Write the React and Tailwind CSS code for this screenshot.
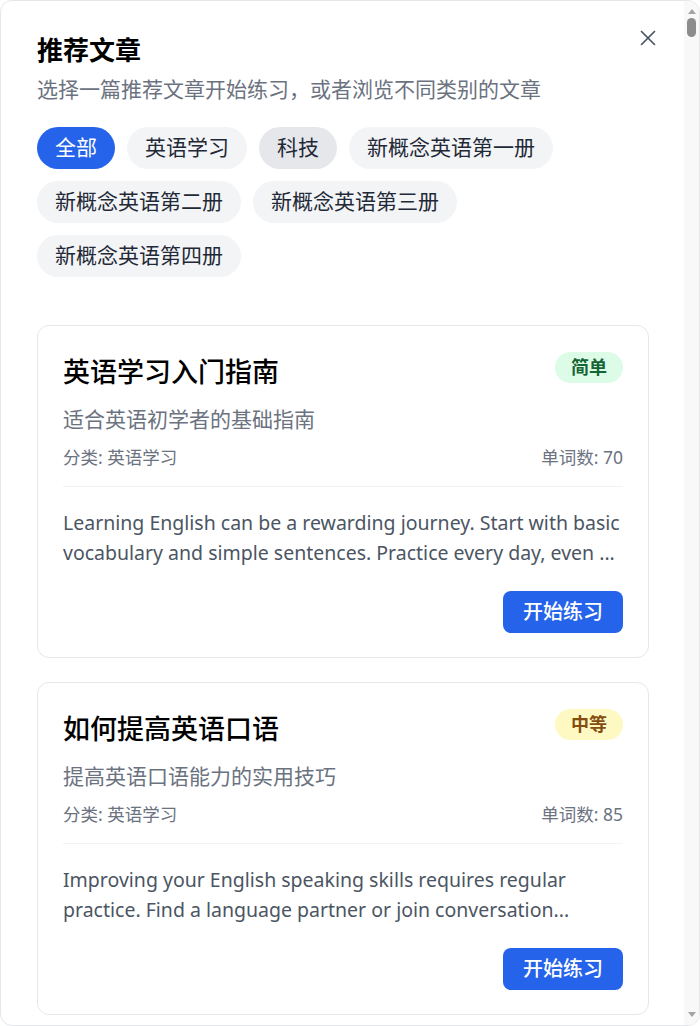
import React from "react";

const baseArticles = [
  {
    title: "英语学习入门指南",
    desc: "适合英语初学者的基础指南",
    category: "英语学习",
    words: 70,
    level: "简单",
    body: "Learning English can be a rewarding journey. Start with basic vocabulary and simple sentences. Practice every day, even ...",
  },
  {
    title: "如何提高英语口语",
    desc: "提高英语口语能力的实用技巧",
    category: "英语学习",
    words: 85,
    level: "中等",
    body: "Improving your English speaking skills requires regular practice. Find a language partner or join conversation...",
  },
  {
    title: "人工智能的未来",
    desc: "探讨人工智能技术的发展趋势",
    category: "科技",
    words: 120,
    level: "困难",
    body: "Artificial intelligence is changing the way we live and work. From smart assistants to self-driving cars, AI is everywh...",
  },
];

const books = [
  { name: "新概念英语第一册", count: 3, level: "简单" },
  { name: "新概念英语第二册", count: 2, level: "中等" },
  { name: "新概念英语第三册", count: 2, level: "困难" },
  { name: "新概念英语第四册", count: 2, level: "困难" },
];

const articles = [
  ...baseArticles,
  ...books.flatMap((b) =>
    Array.from({ length: b.count }, (_, i) => ({
      title: `${b.name} 第${i + 1}课`,
      desc: `${b.name}课文练习`,
      category: b.name,
      words: 60 + ((i * 37) % 180),
      level: b.level,
      body: "Read the lesson carefully and type each sentence to practise your spelling, grammar and listening skills step by...",
    }))
  ),
];

const categories = [
  "全部",
  "英语学习",
  "科技",
  "新概念英语第一册",
  "新概念英语第二册",
  "新概念英语第三册",
  "新概念英语第四册",
];

function LevelBadge({ level }) {
  if (level === "简单")
    return (
      <span className="shrink-0 rounded-full bg-[#dcfce7] px-[16px] h-[31px] flex items-center text-[18px] font-semibold text-[#166534]">
        {level}
      </span>
    );
  if (level === "中等")
    return (
      <span className="shrink-0 rounded-full bg-[#fef9c3] px-[16px] h-[31px] flex items-center text-[18px] font-semibold text-[#854d0e]">
        {level}
      </span>
    );
  return (
    <span className="shrink-0 rounded-full bg-[#fee2e2] px-[16px] h-[31px] flex items-center text-[18px] font-semibold text-[#991b1b]">
      {level}
    </span>
  );
}

function ArticleCard({ a }) {
  return (
    <div className="rounded-[12px] border border-[#e5e7eb] bg-white px-[25px] pt-[26px] pb-[24px]">
      <div className="flex items-start justify-between gap-4">
        <h3 className="text-[27px] leading-[40px] font-medium text-black">{a.title}</h3>
        <LevelBadge level={a.level} />
      </div>
      <p className="mt-[13px] text-[21px] leading-[28px] text-[#6b7280]">{a.desc}</p>
      <div className="mt-[12px] flex justify-between border-b border-[#f1f2f4] pb-[17px] text-[17.5px] leading-[24px] text-[#6b7280]">
        <span>分类: {a.category}</span>
        <span>单词数: {a.words}</span>
      </div>
      <p className="mt-[21px] line-clamp-2 text-[19.5px] leading-[30px] text-[#4b5563]">{a.body}</p>
      <div className="mt-[23px] flex justify-end">
        <button className="h-[42px] rounded-[8px] bg-[#2563eb] px-[20px] text-[20px] font-medium text-white">
          开始练习
        </button>
      </div>
    </div>
  );
}

function ScrollBar() {
  return (
    <div className="flex w-[15px] shrink-0 flex-col bg-[#f8f8f8]">
      <div className="flex h-[16px] items-center justify-center pt-[5px]">
        <svg width="8" height="5" viewBox="0 0 8 5">
          <path d="M4 0 8 5H0Z" fill="#a3a3a3" />
        </svg>
      </div>
      <div className="flex-1 pt-[1px]">
        <div className="mx-auto h-[19px] w-[9px] rounded-full bg-[#8c8c8c]" />
      </div>
      <div className="flex h-[16px] items-center justify-center pb-[6px]">
        <svg width="8" height="5" viewBox="0 0 8 5">
          <path d="M0 0H8L4 5Z" fill="#a3a3a3" />
        </svg>
      </div>
    </div>
  );
}

export default function App() {
  return (
    <div className="relative flex h-[1026px] w-[700px] overflow-hidden rounded-[12px] border border-[#e5e7eb] bg-white font-['Noto_Sans','Noto_Sans_CJK_SC',sans-serif]">
      <div className="min-w-0 flex-1 overflow-y-auto">
        <div className="pl-[36px] pr-[35px] pt-[32px] pb-[36px]">
          <h2 className="text-[26px] leading-[34px] font-bold text-black">推荐文章</h2>
          <p className="mt-[8px] text-[21px] leading-[28px] text-[#6b7280]">
            选择一篇推荐文章开始练习，或者浏览不同类别的文章
          </p>
          <div className="mt-[24px] flex flex-wrap gap-[12px]">
            {categories.map((c, i) => (
              <button
                key={c}
                className={
                  i === 0
                    ? "h-[42px] rounded-full bg-[#2563eb] px-[18px] text-[21px] text-white"
                    : i === 2
                    ? "h-[42px] rounded-full bg-[#e5e7eb] px-[18px] text-[21px] text-[#1f2937]"
                    : "h-[42px] rounded-full bg-[#f3f4f6] px-[18px] text-[21px] text-[#1f2937]"
                }
              >
                {c}
              </button>
            ))}
          </div>
          <div className="mt-[48px] flex flex-col gap-[24px]">
            {articles.map((a, i) => (
              <ArticleCard key={i} a={a} />
            ))}
          </div>
        </div>
      </div>
      <ScrollBar />
      <button className="absolute top-[29px] right-[43px] text-[#4b5563]" aria-label="关闭">
        <svg width="16" height="16" viewBox="0 0 16 16" fill="none" stroke="currentColor" strokeWidth="1.7" strokeLinecap="round">
          <path d="M1.5 1.5 14.5 14.5" />
          <path d="M14.5 1.5 1.5 14.5" />
        </svg>
      </button>
    </div>
  );
}
